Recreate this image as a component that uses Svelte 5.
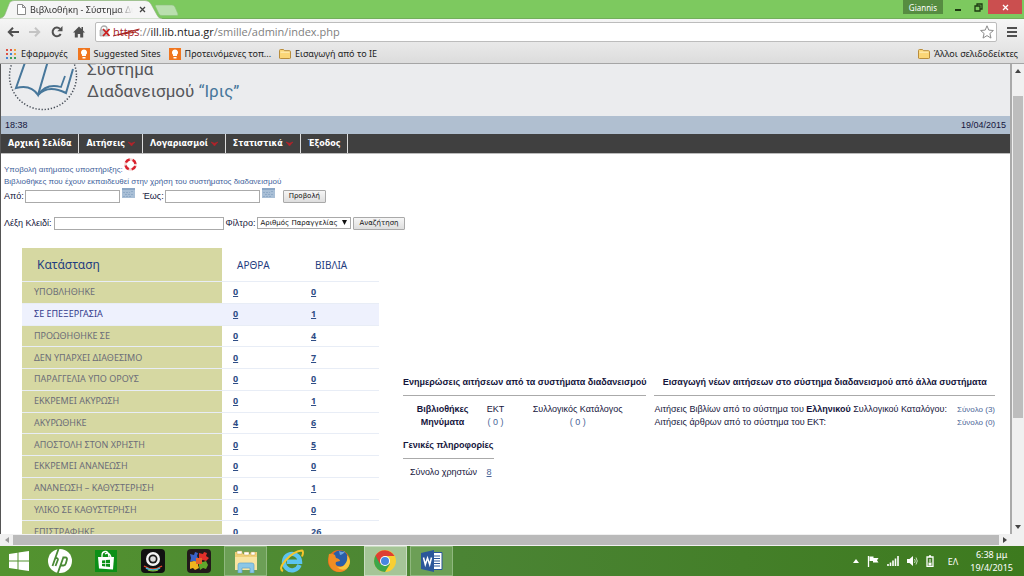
<script lang="ts">
	const bookmarks = [
		{ label: 'Εφαρμογές', icon: 'apps' },
		{ label: 'Suggested Sites', icon: 'bulb' },
		{ label: 'Προτεινόμενες τοπ...', icon: 'bulb' },
		{ label: 'Εισαγωγή από το IE', icon: 'folder' }
	];

	const menu = [
		{ label: 'Αρχική Σελίδα', sub: false },
		{ label: 'Αιτήσεις', sub: true },
		{ label: 'Λογαριασμοί', sub: true },
		{ label: 'Στατιστικά', sub: true },
		{ label: 'Έξοδος', sub: false }
	];

	const rows = [
		{ name: 'ΥΠΟΒΛΗΘΗΚΕ', articles: 0, books: 0 },
		{ name: 'ΣΕ ΕΠΕΞΕΡΓΑΣΙΑ', articles: 0, books: 1 },
		{ name: 'ΠΡΟΩΘΗΘΗΚΕ ΣΕ', articles: 0, books: 4 },
		{ name: 'ΔΕΝ ΥΠΑΡΧΕΙ ΔΙΑΘΕΣΙΜΟ', articles: 0, books: 7 },
		{ name: 'ΠΑΡΑΓΓΕΛΙΑ ΥΠΟ ΟΡΟΥΣ', articles: 0, books: 0 },
		{ name: 'ΕΚΚΡΕΜΕΙ ΑΚΥΡΩΣΗ', articles: 0, books: 1 },
		{ name: 'ΑΚΥΡΩΘΗΚΕ', articles: 4, books: 6 },
		{ name: 'ΑΠΟΣΤΟΛΗ ΣΤΟΝ ΧΡΗΣΤΗ', articles: 0, books: 5 },
		{ name: 'ΕΚΚΡΕΜΕΙ ΑΝΑΝΕΩΣΗ', articles: 0, books: 0 },
		{ name: 'ΑΝΑΝΕΩΣΗ – ΚΑΘΥΣΤΕΡΗΣΗ', articles: 0, books: 1 },
		{ name: 'ΥΛΙΚΟ ΣΕ ΚΑΘΥΣΤΕΡΗΣΗ', articles: 0, books: 0 },
		{ name: 'ΕΠΙΣΤΡΑΦΗΚΕ', articles: 0, books: 26 }
	];

	const apps = ['hp', 'store', 'webcam', 'puzzle', 'explorer', 'ie', 'firefox', 'chrome', 'word'];
	const open = ['explorer', 'chrome', 'word'];

	let active = $state('ΣΕ ΕΠΕΞΕΡΓΑΣΙΑ');
	let from = $state('');
	let to = $state('');
	let keyword = $state('');
</script>

{#snippet folder()}
	<svg width="12" height="10" viewBox="0 0 12 10">
		<path d="M.5 9V1.5q0-1 1-1h3l1 1.2h5q1 0 1 1V9q0 .5-1 .5h-9Q.5 9.500.5 9z" fill="#fbd677" stroke="#b98d3c" />
		<path d="M1.500 3.200h9" stroke="#fff0bd" />
	</svg>
{/snippet}

{#snippet calendar()}
	<svg width="13" height="10" viewBox="0 0 13 10">
		<path d="M0 0h13v10H0z" fill="#a9bfd6" />
		<path d="M0 1h13" stroke="#8ba6c4" stroke-width="2" />
		<path d="M1 4.500h7M3 6.500h9M1 8.500h9M9 3.500h3" stroke="#8faac7" stroke-dasharray="2 1" />
	</svg>
{/snippet}

<div class="desktop">
	<header class="titlebar">
		<svg class="tab-shape" width="180" height="19" viewBox="0 0 180 19">
			<path d="M0 19V18Q4 18 5.500 13L9 4Q10 .5 14 .5H145Q149 .5 151 4L157 15Q158.500 18.500 162 18.500V19z" fill="#f5f5f5" stroke="#8fae80" stroke-width=".6" />
			<path d="M156 5H172Q174 5 175 7L178 14Q178.500 15.500 176.500 15.500H162Q160 15.500 159 14L155.500 6.500Q155 5 156 5z" fill="#b9dfae" stroke="#8cc17b" stroke-width=".6" />
		</svg>
		<div class="tab">
			<svg width="9" height="11" viewBox="0 0 9 11">
				<path d="M.5.5h5l3 3v7h-8zM5.500.5v3h3" fill="#fff" stroke="#8a8a8a" />
			</svg>
			<span class="tab-title">Βιβλιοθήκη - Σύστημα Δια</span>
			<button class="close-tab" aria-label="Close tab">
				<svg width="7" height="7" viewBox="0 0 7 7"><path d="M1 1l5 5M6 1L1 6" stroke="#444" stroke-width="1.300" /></svg>
			</button>
		</div>
		<div class="window-controls">
			<button class="user">Giannis</button>
			<button class="win" aria-label="Minimize">
				<svg width="8" height="10" viewBox="0 0 8 10"><path d="M1 8h6" stroke="#1d3a12" stroke-width="2" /></svg>
			</button>
			<button class="win" aria-label="Restore">
				<svg width="9" height="9" viewBox="0 0 9 9"><path d="M1 3h5v5H1zM3 2.500V1h5v5H6.500" fill="none" stroke="#1d3a12" stroke-width="1.300" /></svg>
			</button>
			<button class="win close" aria-label="Close">
				<svg width="7" height="7" viewBox="0 0 7 7"><path d="M1 1l5 5M6 1L1 6" stroke="#fff" stroke-width="1.300" /></svg>
			</button>
		</div>
	</header>

	<nav class="toolbar">
		<button aria-label="Back">
			<svg width="12" height="10" viewBox="0 0 12 10"><path d="M12 5H2M6 .8L1.800 5 6 9.200" fill="none" stroke="#505050" stroke-width="2" /></svg>
		</button>
		<button aria-label="Forward">
			<svg width="12" height="10" viewBox="0 0 12 10"><path d="M0 5h10M6 .8L10.200 5 6 9.200" fill="none" stroke="#c4c4c4" stroke-width="2" /></svg>
		</button>
		<button aria-label="Reload">
			<svg width="12" height="12" viewBox="0 0 12 12">
				<path d="M9.700 8A4.300 4.300 0 1 1 9 2.900" fill="none" stroke="#505050" stroke-width="2" />
				<path d="M11.500 0v5.200H6.300z" fill="#505050" />
			</svg>
		</button>
		<button aria-label="Home">
			<svg width="12" height="12" viewBox="0 0 12 12"><path d="M6 .5L0 6.500h1.800V11.500h3V8h2.400v3.500h3V6.500H12L10 4.500V1H8.500v2z" fill="#505050" /></svg>
		</button>
		<div class="address">
			<svg width="12" height="13" viewBox="0 0 12 13">
				<path d="M2 6V4a3 3 0 0 1 6 0v2" fill="none" stroke="#aaa" stroke-width="1.300" />
				<path d="M1 5h8v6H1z" fill="#ccc" stroke="#999" stroke-width=".6" />
				<path d="M4 4l6.500 7M10.500 4L4 11" stroke="#cc1d1d" stroke-width="1.800" />
			</svg>
			<span class="url"><span class="scheme">https<svg viewBox="0 0 28 10" preserveAspectRatio="none"><path d="M0 8L28 1M4 7l20-3" stroke="#a5201d" stroke-width="1.200" /></svg></span>://<b>ill.lib.ntua.gr</b>/smille/admin/index.php</span>
			<button aria-label="Bookmark this page">
				<svg width="14" height="14" viewBox="0 0 14 14"><path d="M7 .8l1.800 4.300 4.600.4-3.500 3 1.100 4.600L7 10.600l-4 2.500 1.100-4.600-3.500-3 4.600-.4z" fill="#fff" stroke="#8b8b8b" /></svg>
			</button>
		</div>
		<button class="burger" aria-label="Menu">
			<svg width="10" height="10" viewBox="0 0 10 10"><path d="M0 1h10M0 5h10M0 9h10" stroke="#4f4f4f" stroke-width="2" /></svg>
		</button>
	</nav>

	<nav class="bookmarks">
		{#each bookmarks as b}
			<a href="#{b.icon}">
				{#if b.icon === 'apps'}
					<svg width="11" height="10" viewBox="0 0 11 10">
						<path d="M0 1h2M4 1h2M0 5h2" stroke="#dd5144" stroke-width="2" />
						<path d="M8 1h2M8 5h2" stroke="#f0a13a" stroke-width="2" />
						<path d="M4 5h2M0 9h2" stroke="#4285d6" stroke-width="2" />
						<path d="M4 9h2M8 9h2" stroke="#3a9e57" stroke-width="2" />
					</svg>
				{:else if b.icon === 'bulb'}
					<svg width="12" height="12" viewBox="0 0 12 12">
						<path d="M0 0h12v12H0z" fill="#f0761f" />
						<path d="M6 1.500a3 3 0 0 0-2 5.300V8h4V6.800A3 3 0 0 0 6 1.500zM4.500 9h3v1.500h-3z" fill="#fff" />
					</svg>
				{:else}
					{@render folder()}
				{/if}
				{b.label}
			</a>
		{/each}
		<a class="other" href="#other">{@render folder()} Άλλοι σελιδοδείκτες</a>
	</nav>

	<div class="viewport">
		<div class="page">
			<div class="banner">
				<div class="brand">
					<svg width="70" height="70" viewBox="0 0 70 70">
						<circle cx="35" cy="35" r="33.500" fill="none" stroke="#444b55" stroke-width="1.500" stroke-dasharray="1.300 1.800" />
						<g fill="none" stroke="#47779b" stroke-width="2">
							<path d="M20 13L8 47Q23 43 30 54L42 13" />
							<path d="M30 54Q40 43 58 52L65 28" />
							<path d="M30 54Q38 42 53 46L57 35" stroke-width="1.800" />
						</g>
					</svg>
					<h1>Σύστημα<br />Διαδανεισμού <em>“Ιρις”</em></h1>
				</div>
			</div>
			<div class="clock"><span>18:38</span><span>19/04/2015</span></div>
			<nav class="menu">
				{#each menu as item}
					<a href="#{item.label}">
						{item.label}
						{#if item.sub}
							<svg width="7" height="6" viewBox="0 0 7 6"><path d="M0 1l3.500 4L7 1 3.500 2.200z" fill="#b3242a" stroke="#b3242a" stroke-width=".6" /></svg>
						{/if}
					</a>
				{/each}
			</nav>

			<div class="content">
				<a class="note support" href="#support">Υποβολή αιτήματος υποστήριξης:
					<svg width="13" height="13" viewBox="0 0 13 13">
						<circle cx="6.500" cy="6.500" r="5" fill="none" stroke="#f3d2d2" stroke-width="2.500" />
						<circle cx="6.500" cy="6.500" r="5" fill="none" stroke="#d9202b" stroke-width="2.500" stroke-dasharray="4.800 3.054" stroke-dashoffset="-1.600" />
					</svg>
				</a>
				<a class="note" href="#trained">Βιβλιοθήκες που έχουν εκπαιδευθεί στην χρήση του συστήματος διαδανεισμού</a>

				<form class="dates">
					<label for="from">Από:</label>
					<input id="from" type="text" bind:value={from} />
					<button class="cal" type="button" aria-label="Από">{@render calendar()}</button>
					<label class="until" for="to">Έως:</label>
					<input id="to" type="text" bind:value={to} />
					<button class="cal" type="button" aria-label="Έως">{@render calendar()}</button>
					<button class="btn show" type="button">Προβολή</button>
				</form>

				<form class="search">
					<label for="keyword">Λέξη Κλειδί:</label>
					<input id="keyword" type="text" bind:value={keyword} />
					<label for="filter">Φίλτρο:</label>
					<span class="select">
						<select id="filter">
							<option>Αριθμός Παραγγελίας</option>
						</select>
						<svg width="5" height="5" viewBox="0 0 6 6"><path d="M0 0h6L3 6z" fill="#111" /></svg>
					</span>
					<button class="btn" type="button">Αναζήτηση</button>
				</form>

				<div class="columns">
					<table class="status">
						<thead>
							<tr>
								<th>Κατάσταση</th>
								<th>ΑΡΘΡΑ</th>
								<th>ΒΙΒΛΙΑ</th>
							</tr>
						</thead>
						<tbody>
							{#each rows as row}
								<tr class:active={active === row.name} onmouseenter={() => (active = row.name)}>
									<td>{row.name}</td>
									<td><a href="#articles">{row.articles}</a></td>
									<td><a href="#books">{row.books}</a></td>
								</tr>
							{/each}
						</tbody>
					</table>

					<div class="updates">
						<h2>Ενημερώσεις αιτήσεων από τα συστήματα διαδανεισμού</h2>
						<table>
							<tbody>
								<tr><th>Βιβλιοθήκες</th><td>ΕΚΤ</td><td>Συλλογικός Κατάλογος</td></tr>
								<tr><th>Μηνύματα</th><td><a href="#ekt">( 0 )</a></td><td><a href="#catalogue">( 0 )</a></td></tr>
							</tbody>
						</table>
						<div class="general">
							<h2>Γενικές πληροφορίες</h2>
							<p>Σύνολο χρηστών <a href="#users">8</a></p>
						</div>
					</div>

					<div class="imports">
						<h2>Εισαγωγή νέων αιτήσεων στο σύστημα διαδανεισμού από άλλα συστήματα</h2>
						<p><span>Αιτήσεις Βιβλίων από το σύστημα του <b>Ελληνικού</b> Συλλογικού Καταλόγου:</span> <a href="#total-books">Σύνολο (3)</a></p>
						<p><span>Αιτήσεις άρθρων από το σύστημα του ΕΚΤ:</span> <a href="#total-articles">Σύνολο (0)</a></p>
					</div>
				</div>
			</div>
		</div>
		<div class="vscroll">
			<svg width="6" height="4" viewBox="0 0 6 4"><path d="M0 4l3-4 3 4z" fill="#444" /></svg>
			<div class="vtrack"><div class="vthumb"></div></div>
			<svg width="6" height="4" viewBox="0 0 6 4"><path d="M0 0h6L3 4z" fill="#444" /></svg>
		</div>
	</div>

	<div class="hscroll">
		<svg width="4" height="6" viewBox="0 0 4 6"><path d="M4 0v6L0 3z" fill="#999" /></svg>
		<div class="hthumb"></div>
		<svg width="4" height="6" viewBox="0 0 4 6"><path d="M0 0v6l4-3z" fill="#444" /></svg>
	</div>

	<footer class="taskbar">
		<button class="start" aria-label="Start">
			<svg width="20" height="20" viewBox="0 0 20 20">
				<path d="M0 3l8.500-1.200v7.700H0zM9.500 1.600L20 0v9.500H9.500zM0 10.500h8.500v7.700L0 17zM9.500 10.500H20V20L9.500 18.400z" fill="#fff" />
			</svg>
		</button>
		<div class="apps">
			{#each apps as app}
				<button class:open={open.includes(app)} class:current={app === 'chrome'} aria-label={app}>
					<svg width="24" height="24" viewBox="0 0 24 24">
						{#if app === 'hp'}
							<circle cx="12" cy="12" r="12" fill="#fff" />
							<path d="M10.500 0L4.500 17M6.500 10q4-2 3.300 1L7.500 17M15.500 8L9.800 24M14.500 8.500h3q2 0 1.300 2.500l-1 3.500q-.6 2-2.300 2h-2.500" fill="none" stroke="#4a8a35" stroke-width="1.800" />
						{:else if app === 'store'}
							<path d="M1 1h22v22H1z" fill="#0c9017" />
							<path d="M4 8h16l-1 12.500L5 19.500z" fill="#fff" />
							<path d="M8 9V6q0-3 3-3.500Q14.500 2 15 8M11 5q4-3 6 3" fill="none" stroke="#fff" stroke-width="1.300" />
							<path d="M8 11.500l3.300-.3v2.700H8zM12 11.100l4-.4v3.200h-4zM8 14.700h3.300v2.700L8 17.100zM12 14.700h4v3.200l-4-.4z" fill="#0c9017" />
						{:else if app === 'webcam'}
							<rect width="24" height="24" rx="4" fill="#111" />
							<circle cx="12" cy="10" r="7" fill="#f5f5f5" />
							<circle cx="12" cy="10" r="4.500" fill="#181818" />
							<circle cx="12" cy="10" r="2.800" fill="#ddd" />
							<path d="M3 17q9 6 18 0" fill="none" stroke="#e64b2c" stroke-width="1.500" />
							<path d="M5 19q7 4 14 0" fill="none" stroke="#41b8de" stroke-width="1.500" />
							<path d="M7 21q5 2 10 0" fill="none" stroke="#8bc83b" stroke-width="1.200" />
						{:else if app === 'puzzle'}
							<rect width="24" height="24" rx="4" fill="#221a1a" />
							<path d="M3 5l4 1 1-3 3 1-1 3 2 4-3 2-3-1-3 1 1-4z" fill="#3a63c7" />
							<path d="M12 4l4 1 1-2 3 1-1 3 3 2-3 3-3-1-4 1z" fill="#e1302a" />
							<path d="M3 13l4-1 5 1-1 3 1 3-4 2-2-2-3 1z" fill="#f0b41e" />
							<path d="M12 12l4 1 3-1 2 4-2 4-3-1-3 2-1-4z" fill="#62a82b" />
							<path d="M9 9h6v6H9z" fill="#e5622a" />
						{:else if app === 'explorer'}
							<path d="M1 3h7l1 2h7l1-2h6v18H1z" fill="#efcf78" />
							<path d="M3 2h5v3H3zM10 3h5v3h-5zM17 3h4v3h-4z" fill="#fff" stroke="#caa24a" stroke-width=".5" />
							<path d="M1 8h22v13H1z" fill="#f9e4a1" />
							<path d="M4 24v-8q0-2 2-2h12q2 0 2 2v8h-4v-5H8v5z" fill="#8cc7e6" stroke="#5ca3cd" stroke-width=".7" />
						{:else if app === 'ie'}
							<path d="M19.500 16A8 8.200 0 1 1 20 12.800H7" fill="none" stroke="#5cc4f0" stroke-width="4.400" />
							<path d="M3 22Q-2 20 6 11T22 1.500q2 1 0 6" fill="none" stroke="#f6c52d" stroke-width="2" />
						{:else if app === 'firefox'}
							<circle cx="12" cy="12" r="11" fill="#e66a1f" />
							<circle cx="13" cy="9.500" r="8" fill="#2b5ea8" />
							<path d="M12 2q4 2 6 0-1 3-5 4z" fill="#6ca5dc" />
							<path d="M2 5q-1 3 0 10 3 8 11 8 9-1 10-11-3 7-9 6-7-1-5-5l4-1q0-2-4-3L8 6Q5 4 2 5z" fill="#f18d23" />
							<path d="M23 12q-1-4-3-6 1 6-2 9-3 4-8 3 4 4 9 2 4-3 4-8z" fill="#f8c63c" />
						{:else if app === 'chrome'}
							<circle cx="12" cy="12" r="11" fill="#f8cf33" />
							<path d="M12 12L2.500 6.500A11 11 0 0 0 12 23l5-8z" fill="#3da64a" />
							<path d="M2.500 6.500A11 11 0 0 1 21.500 7H12l-5 8z" fill="#de3f33" />
							<circle cx="12" cy="12" r="5" fill="#fff" />
							<circle cx="12" cy="12" r="4" fill="#4686e0" />
						{:else}
							<path d="M12 3.500h10v17H12z" fill="#fff" stroke="#2b579a" />
							<path d="M14 7h6M14 9.500h6M14 12h6M14 14.500h6M14 17h6" stroke="#2b579a" />
							<path d="M1 4l13-3v22L1 20z" fill="#2b579a" />
							<path d="M3.500 8.500L5.300 15.500 7.500 9l2.200 6.500 1.800-7" fill="none" stroke="#fff" stroke-width="1.500" />
						{/if}
					</svg>
				</button>
			{/each}
		</div>
		<div class="tray">
			<svg width="6" height="4" viewBox="0 0 6 4"><path d="M0 4l3-4 3 4z" fill="#fff" /></svg>
			<svg width="12" height="12" viewBox="0 0 12 12"><path d="M1.500 1v11" stroke="#fff" stroke-width="1.300" /><path d="M2.500 1.500h4v1.500h5l-1.500 2.200 1.500 2.300H6V6H2.500z" fill="#fff" /></svg>
			<svg width="12" height="10" viewBox="0 0 12 10"><path d="M1 10V8M3.500 10V6.500M6 10V4.500M8.500 10V2.500M11 10V0" stroke="#fff" stroke-width="1.600" /></svg>
			<svg width="11" height="12" viewBox="0 0 11 12"><path d="M0 4h2.500L6 1v10L2.500 8H0z" fill="#fff" /><path d="M7.500 4q1.500 2 0 4M9 2.500q2.500 3.500 0 7" fill="none" stroke="#c7dfbf" /></svg>
			<svg width="8" height="12" viewBox="0 0 8 12"><path d="M1 2h6v9.500H1zM3 .8h2" fill="none" stroke="#fff" stroke-width="1.300" /><path d="M2.500 7.500h3v3h-3zM3.500 4h1v3h-1z" fill="#fff" /></svg>
			<span class="lang">ΕΛ</span>
			<span class="time">6:38 μμ<br />19/4/2015</span>
		</div>
	</footer>
</div>

<style>
	:global(body) {
		margin: 0;
	}

	.desktop {
		display: flex;
		flex-direction: column;
		height: 100vh;
		overflow: hidden;
		font-family: 'Liberation Sans', Arial, sans-serif;
		font-size: 9px;
		color: #15153c;
		background: #fff;
	}

	svg {
		flex: none;
		display: block;
	}

	button {
		font: inherit;
		padding: 0;
		border: 0;
		background: none;
		display: flex;
		align-items: center;
		justify-content: center;
	}

	a {
		color: inherit;
		text-decoration: none;
	}

	/* browser chrome */
	.titlebar {
		position: relative;
		display: flex;
		justify-content: space-between;
		height: 18px;
		flex: none;
		background: #7dc95f;
		border-bottom: 1px solid #72ae5b;
		font-family: 'Noto Sans', sans-serif;
	}

	.tab-shape {
		position: absolute;
		left: 0;
		top: 0;
	}

	.tab {
		position: relative;
		display: flex;
		align-items: center;
		gap: 4px;
		padding-left: 17px;
	}

	.tab-title {
		width: 103px;
		overflow: hidden;
		white-space: nowrap;
		font-size: 9px;
		color: #333;
		mask-image: linear-gradient(to right, #000 84%, transparent);
	}

	.close-tab {
		margin-left: 2px;
	}

	.window-controls {
		display: flex;
		align-items: flex-start;
		padding-right: 2px;
	}

	.user {
		height: 14px;
		padding: 0 6px;
		margin-right: 5px;
		background: #568c41;
		color: #fff;
		font-size: 8px;
	}

	.win {
		width: 20px;
		height: 14px;
	}

	.win.close {
		width: 34px;
		background: #cb4f4f;
	}

	.toolbar {
		display: flex;
		align-items: center;
		flex: none;
		gap: 10px;
		height: 25px;
		padding: 0 7px;
		background: linear-gradient(#f5f5f5, #e8e8e8);
	}

	.address {
		display: flex;
		align-items: center;
		flex: 1;
		gap: 2px;
		height: 18px;
		padding: 0 2px 0 3px;
		background: #fff;
		border: 1px solid #bcbcbc;
		border-radius: 2px;
	}

	.url {
		flex: 1;
		font-family: 'Open Sans', sans-serif;
		font-size: 11px;
		line-height: 16px;
		color: #808080;
	}

	.url b {
		font-weight: 400;
		color: #222;
	}

	.scheme {
		position: relative;
		color: #a5201d;
	}

	.scheme svg {
		position: absolute;
		left: 0;
		top: 4px;
		width: 100%;
		height: 10px;
	}

	.bookmarks {
		display: flex;
		align-items: center;
		flex: none;
		gap: 8px;
		height: 19px;
		padding: 0 6px;
		background: linear-gradient(#e8e8e8, #dcdcdc);
		border-bottom: 1px solid #a5a5a5;
		font-family: 'Noto Sans', sans-serif;
		font-size: 9px;
		color: #222;
	}

	.bookmarks a {
		display: flex;
		align-items: center;
		gap: 4px;
	}

	.bookmarks a:first-child {
		margin-right: 2px;
	}

	.bookmarks .other {
		margin-left: auto;
	}

	/* web page */
	.viewport {
		display: flex;
		flex: 1;
		min-height: 0;
	}

	.page {
		flex: 1;
		min-width: 0;
		overflow: hidden;
		border-left: 1px solid #555;
		border-right: 2px solid #aaa;
	}

	.banner {
		display: flex;
		align-items: flex-end;
		height: 52px;
		overflow: hidden;
		background: #ebecee;
	}

	.brand {
		display: flex;
		align-items: flex-end;
		gap: 9px;
		padding: 0 0 5px 7px;
	}

	h1 {
		margin: 0 0 9px;
		font-family: Roboto, sans-serif;
		font-size: 17px;
		line-height: 22px;
		font-weight: 400;
		color: #55565a;
	}

	h1 em {
		font-style: normal;
		color: #47779b;
	}

	.clock {
		display: flex;
		justify-content: space-between;
		padding: 0 4px;
		line-height: 18px;
		background: #b0bfd0;
	}

	.menu {
		display: flex;
		height: 19px;
		background: #404040;
		border-bottom: 1px solid #bbb;
	}

	.menu a {
		display: flex;
		align-items: center;
		gap: 3px;
		padding: 0 7px;
		border-right: 1px solid #ddd;
		font-family: 'DejaVu Sans', Verdana, sans-serif;
		font-size: 8px;
		font-weight: 700;
		color: #fff;
	}

	.content {
		padding: 4px 0 0 3px;
	}

	.note {
		display: flex;
		align-items: flex-end;
		gap: 1px;
		height: 12px;
		line-height: 12px;
		font-size: 8px;
		color: #3f5f9b;
	}

	.support {
		height: 18px;
	}

	.support svg {
		align-self: flex-start;
	}

	form {
		display: flex;
		align-items: center;
		gap: 2px;
		height: 16px;
	}

	input {
		box-sizing: border-box;
		width: 95px;
		height: 13px;
		padding: 0 2px;
		border: 1px solid #aaa;
		background: #fff;
		font: inherit;
	}

	.dates {
		gap: 1px;
	}

	.cal {
		align-self: flex-start;
		margin-left: 1px;
	}

	.until {
		margin-left: 7px;
	}

	.btn {
		height: 13px;
		padding: 0 5px;
		border: 1px solid #a9a9a9;
		border-radius: 1px;
		background: linear-gradient(#f6f6f6, #dedede);
		font-family: 'DejaVu Sans', sans-serif;
		font-size: 7px;
		color: #111;
	}

	.show {
		margin-left: 7px;
	}

	.search {
		margin-top: 11px;
	}

	.search input {
		width: 170px;
	}

	.select {
		position: relative;
	}

	.select select {
		display: block;
		appearance: none;
		box-sizing: border-box;
		width: 94px;
		height: 12px;
		padding: 0 2px;
		border: 1px solid #a9a9a9;
		border-radius: 0;
		background: #fff;
		font-family: 'DejaVu Sans', sans-serif;
		font-size: 7px;
		color: #111;
	}

	.select svg {
		position: absolute;
		right: 4px;
		top: 3px;
		pointer-events: none;
	}

	.columns {
		display: flex;
		align-items: flex-start;
		padding: 17px 15px 0 18px;
	}

	table {
		border-collapse: collapse;
	}

	.status {
		width: 357px;
		height: 295px;
		font-family: 'Noto Sans', sans-serif;
		font-size: 9px;
	}

	.status th,
	.status td {
		padding: 0 0 0 11px;
		line-height: 14px;
		text-align: left;
		border-bottom: 1px solid #e8edf6;
	}

	.status th {
		height: 33px;
		padding-left: 15px;
		font-size: 10px;
		font-weight: 400;
		color: #1f3d80;
	}

	.status th:first-child {
		width: 185px;
		font-size: 12px;
	}

	.status th:nth-child(2) {
		width: 63px;
	}

	.status th:first-child,
	.status td:first-child {
		background: #d6d8a2;
	}

	.status td:first-child {
		padding-left: 12px;
		color: #6c6d78;
	}

	.status a {
		font-weight: 700;
		color: #2f4d86;
		text-decoration: underline;
	}

	.status .active td {
		background: #eef1fd;
		color: #333a8c;
	}

	.updates {
		margin: 128px 8px 0 24px;
	}

	h2 {
		margin: 0;
		padding-bottom: 7px;
		border-bottom: 1px solid #aaa;
		font-size: 9px;
		line-height: 12px;
		font-weight: 700;
		text-align: center;
		white-space: nowrap;
	}

	.updates table {
		width: 100%;
		margin-top: 7px;
		line-height: 13px;
		text-align: center;
	}

	.updates th,
	.updates td {
		padding: 0;
	}

	.updates a,
	.imports a {
		color: #4a6597;
	}

	.general {
		width: max-content;
		margin-top: 10px;
	}

	.general p {
		margin: 7px 0 0 7px;
		line-height: 13px;
	}

	.general a {
		margin-left: 7px;
		text-decoration: underline;
	}

	.imports {
		flex: 1;
		margin-top: 128px;
	}

	.imports h2 {
		margin-bottom: 7px;
	}

	.imports p {
		display: flex;
		justify-content: space-between;
		margin: 0;
		line-height: 13px;
		white-space: nowrap;
	}

	.imports a {
		font-size: 8px;
	}

	/* scrollbars */
	.vscroll {
		display: flex;
		flex-direction: column;
		align-items: center;
		gap: 5px;
		width: 12px;
		padding: 5px 0;
		background: #f0f0f0;
	}

	.vtrack {
		flex: 1;
		padding-top: 18px;
	}

	.vthumb {
		width: 10px;
		height: 76%;
		background: #bdbdbd;
	}

	.hscroll {
		display: flex;
		align-items: center;
		flex: none;
		gap: 4px;
		height: 12px;
		padding: 0 17px 0 5px;
		background: #f0f0f0;
	}

	.hthumb {
		flex: 1;
		height: 10px;
		background: #bababa;
	}

	/* taskbar */
	.taskbar {
		display: flex;
		flex: none;
		height: 30px;
		background: linear-gradient(to right, #53932f, #4b8434 45%, #3d7a1e);
		color: #fff;
	}

	.start {
		width: 38px;
	}

	.apps {
		display: flex;
		justify-content: space-between;
		width: 415px;
	}

	.apps button {
		box-sizing: border-box;
		width: 43px;
		border: 1px solid transparent;
	}

	.apps .open {
		background: #6c9f56;
		border-color: #8fb87e;
	}

	.apps .current {
		background: #a5c597;
		border-color: #c8dcc0;
	}

	.tray {
		display: flex;
		align-items: center;
		gap: 8px;
		margin-left: auto;
		padding-right: 11px;
		font-family: 'Noto Sans', sans-serif;
		font-size: 9px;
	}

	.lang {
		margin-left: 6px;
	}

	.time {
		margin-left: 4px;
		line-height: 13px;
		text-align: center;
	}
</style>
